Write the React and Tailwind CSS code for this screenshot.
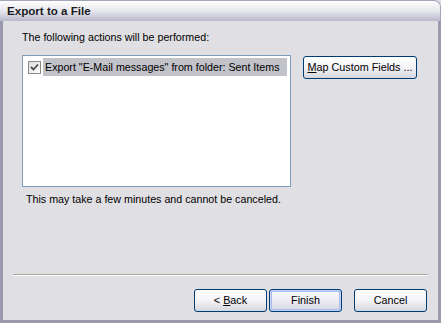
import React from "react"

const font = { fontFamily: '"Liberation Sans", Arial, sans-serif' }

function XpButton({ children, wide, isDefault }) {
  return (
    <button
      className={
        "h-[23px] rounded-[3px] border border-[#003c74] text-[10.8px] text-black flex items-center justify-center " +
        (wide ? "w-[114px] " : "w-[73px] ") +
        (isDefault
          ? "bg-gradient-to-b from-[#ffffff] to-[#d8d8e4] shadow-[inset_0_0_0_1px_#c6d3f7,inset_0_0_0_2px_#a9bdf0]"
          : "bg-gradient-to-b from-[#ffffff] via-[#f4f4f7] to-[#d6d6e0]")
      }
    >
      {children}
    </button>
  )
}

function CheckBox() {
  return (
    <div className="w-[13px] h-[13px] border border-[#8a8a8a] bg-gradient-to-br from-[#dcdcdc] to-[#ffffff] flex items-center justify-center">
      <svg width="9" height="9" viewBox="0 0 9 9">
        <path d="M1 4 L3.5 6.5 L8 1.5" stroke="#4a4a4a" strokeWidth="1.8" fill="none" />
      </svg>
    </div>
  )
}

export default function App() {
  return (
    <div style={font} className="w-[441px] h-[323px] flex flex-col bg-[#e0dfe3] overflow-hidden">

      {/* TITLE BAR */}
      <div className="h-[21px] shrink-0 rounded-tr-[7px] bg-gradient-to-b from-[#ffffff] via-[#e6e6ee] to-[#b9b9cc] border-t border-r border-[#a5a5ba] flex items-center pl-[7px]">
        <span className="text-[11.6px] font-bold text-[#1c1c1c]">Export to a File</span>
      </div>

      {/* BODY */}
      <div className="flex-1 flex flex-col border-x-[3px] border-b-[3px] border-[#9a9aae] pt-[9px]">

        <div className="pl-[19px] text-[10.7px] text-black leading-[14px]">
          The following actions will be performed:
        </div>

        <div className="flex mt-[11px] pl-[19px]">
          <div className="w-[269px] h-[132px] bg-white border border-[#7f9db9] pt-[2px] pl-[5px]">
            <div className="flex items-center gap-[2px]">
              <CheckBox />
              <div className="h-[18px] w-[244px] bg-[#c2c2c9] flex items-center pl-[2px] text-[10.7px] text-black">
                Export "E-Mail messages" from folder: Sent Items
              </div>
            </div>
          </div>

          <div className="ml-[12px] mt-[1px]">
            <XpButton wide>
              <span><span className="underline">M</span>ap Custom Fields ...</span>
            </XpButton>
          </div>
        </div>

        <div className="pl-[23px] mt-[5px] text-[10.7px] text-black leading-[14px]">
          This may take a few minutes and cannot be canceled.
        </div>

        <div className="flex-1" />

        {/* SEPARATOR */}
        <div className="mx-[10px] border-t border-[#aca899] border-b border-b-white" />

        {/* BUTTONS */}
        <div className="flex justify-end pr-[11px] pt-[13px] pb-[8px]">
          <XpButton>
            <span>&lt; <span className="underline">B</span>ack</span>
          </XpButton>
          <div className="ml-[2px]">
            <XpButton isDefault>Finish</XpButton>
          </div>
          <div className="ml-[12px]">
            <XpButton>Cancel</XpButton>
          </div>
        </div>

      </div>
    </div>
  )
}
